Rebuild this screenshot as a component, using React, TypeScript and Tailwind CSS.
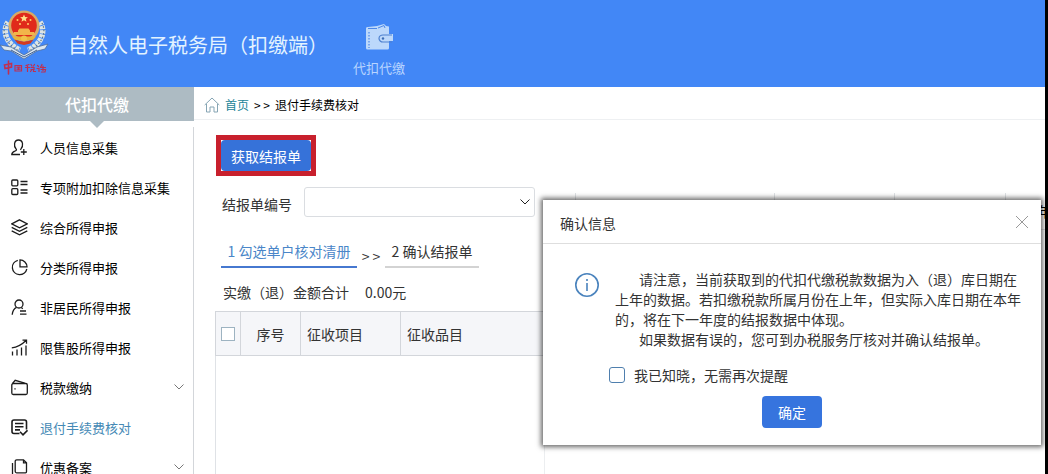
import type { ReactNode } from "react";

type IconName = "person" | "list" | "layers" | "pie" | "resident" | "chart" | "wallet" | "check" | "copy";

const ICONS: Record<IconName, ReactNode> = {
  person: (
    <path d="M4.800 9.500C3.500 8 3.300 6.500 3.600 4.500C4 2.200 5.400 1 7.500 1s3.600 1.200 4 3.500c.3 2-.1 3.800-1.500 5.200M4.800 9.500c1.200 1.200.8 1.900-1 2.700C1.800 13 .8 13.600.8 15.500H9M10 9.700l-.6 1.200M12.800 10v6M9.800 13h6" />
  ),
  list: (
    <>
      <rect x=".8" y="1" width="6" height="5.800" rx="1" />
      <rect x=".8" y="9.700" width="6" height="5.800" rx="1" />
      <path d="M9.500 2.500H16.500M9.500 5.500H16.500M9.500 11H16.500M9.500 14H16.500" />
    </>
  ),
  layers: (
    <path d="M8.500 .8L16.300 4.800 8.500 8.800.7 4.800zM.7 8.300l7.800 4 7.800-4M.7 11.800l7.800 4 7.800-4" />
  ),
  pie: (
    <>
      <path d="M6.800 1.300A7.300 7.300 0 1 0 15.800 10" />
      <path d="M9 .9v6.900h7A7 7 0 0 0 9 .9z" />
    </>
  ),
  resident: (
    <>
      <circle cx="8" cy="5" r="4" />
      <path d="M5.500 8.300C3 9.500 1.600 11.800 1.200 15.700M10.300 8.500l1.500 1.200M9 12h6M9 15.200h6.500" />
    </>
  ),
  chart: (
    <path d="M1.500 12.500v4M6 10.500v6M10.500 8.500v8M15 6.500v10M.8 8.800C6 8.300 10.500 6 15 1.500M11.500 1.200h4v3.500" />
  ),
  wallet: (
    <>
      <rect x=".8" y="4.500" width="15.500" height="11" rx="1.500" />
      <path d="M1.500 4.500L4.200 1.300l9.500 2.900M4 9.300v1.200" />
    </>
  ),
  check: (
    <>
      <path d="M8.500 14.500H3A2 2 0 0 1 1 12.500V3A2 2 0 0 1 3 1h10.500A2 2 0 0 1 15.500 3v7.500" strokeWidth="1.600" />
      <path d="M4 4.500h8.500M4 7.700h8.500M4 10.900h5M9 12.800l3 3 4.500-4.500" strokeWidth="1.600" />
    </>
  ),
  copy: (
    <path d="M5.700.8H12.500l3 3v9a1 1 0 0 1-1 1H5.700a1.500 1.500 0 0 1-1.500-1.500V2.300A1.500 1.500 0 0 1 5.700.8zM12.500.8v3h3M1.500 4v10.700A1.500 1.500 0 0 0 3 16.200h9.500" />
  ),
};

const MENU: { icon: IconName; label: string; expandable?: boolean; active?: boolean }[] = [
  { icon: "person", label: "人员信息采集" },
  { icon: "list", label: "专项附加扣除信息采集" },
  { icon: "layers", label: "综合所得申报" },
  { icon: "pie", label: "分类所得申报" },
  { icon: "resident", label: "非居民所得申报" },
  { icon: "chart", label: "限售股所得申报" },
  { icon: "wallet", label: "税款缴纳", expandable: true },
  { icon: "check", label: "退付手续费核对", active: true },
  { icon: "copy", label: "优惠备案", expandable: true },
];

function MenuIcon({ name }: { name: IconName }) {
  return (
    <svg viewBox="0 0 17 17" className="size-[17px] shrink-0" fill="none" stroke="#1c1c1c" strokeWidth="1.300" aria-hidden="true">
      {ICONS[name]}
    </svg>
  );
}

function Chevron({ className }: { className: string }) {
  return (
    <svg viewBox="0 0 10 6" className={className} fill="none" stroke="currentColor" aria-hidden="true">
      <path d="M.5.500L5 5 9.500.500" />
    </svg>
  );
}

function Emblem() {
  return (
    <svg viewBox="0 0 50 68" className="h-[68px] w-[50px] shrink-0" aria-hidden="true">
      <g fill="none" stroke="#dfe5e2" strokeWidth="5.500" strokeDasharray="3.500 .8">
        <path d="M8 14C2 23 6 36 20 42" />
        <path d="M40 14c6 9 2 22-12 28" />
      </g>
      <g fill="none" stroke="#5b7488" strokeWidth="1.200" strokeDasharray="1.500 2">
        <path d="M6 15C1 25 6 36 19 43" />
        <path d="M42 15c5 10 0 21-13 28" />
      </g>
      <path d="M0 37l11 2 13 8 13-8 11-3-3 5-8 2-13 8-13-8-7-1z" fill="#dce7f0" stroke="#4f6e9c" strokeWidth=".8" />
      <path d="M11 42l13 7 13-7" fill="none" stroke="#3f5f92" />
      <circle cx="24" cy="18" r="15.500" fill="#d8ab66" />
      <circle cx="24" cy="17.500" r="12.800" fill="#e02a1b" />
      <path d="M24 6.500l1.100 2.500 2.800.3-2.100 1.800.7 2.700-2.500-1.500-2.500 1.500.7-2.700-2.100-1.800 2.800-.3z" fill="#ffe08a" />
      <g fill="#ffcf6a">
        <circle cx="17.500" cy="12" r="1" />
        <circle cx="30.500" cy="12" r="1" />
        <circle cx="20" cy="16" r="1" />
        <circle cx="28" cy="16" r="1" />
        <path d="M18 22.500l1.500-2h9l1.500 2v1.500h4l1.500 3h-23l1.500-3h4z" fill="#f2b54a" />
      </g>
      <path d="M12 28.500h24l-3 3.500H15z" fill="#e7b43b" />
      <path d="M14.500 31.500q9.500 4 19 0l-3 4-6.500 1.500-6.500-1.500z" fill="#d43a20" />
      <circle cx="24" cy="30.500" r="3" fill="#f0c24a" />
      <g fill="none" stroke="#c02f50" strokeWidth="1.600" strokeLinecap="round">
        <path d="M4.500 57l7-1.500v3.500l-6.500 1.500zM8.500 53v13" />
        <path d="M15 57.500h6.500v5.500H15zM17 59.200h3M17 61.200h3M18.500 59v2.500" strokeWidth="1.200" />
        <path d="M26 57.500l3-1M27.500 57v6.500M25.500 59.500h4M31 56.500l1 1.500M34.500 56.500l-1 1.500M31 59.500h3v2h-3M32 61.500l-1.500 2M33.500 61.500v2h2" strokeWidth="1.200" />
        <path d="M37.500 57.500l1 1M37 60.500h2v3M42 56.500l-1.500 3h5M43 58v4.500M41 61.500h4.500l-.5 2.500h-3.500" strokeWidth="1.200" />
      </g>
    </svg>
  );
}

function Header() {
  return (
    <header className="flex h-[87px] shrink-0 items-start bg-[#4287f6]">
      <div className="pt-2">
        <Emblem />
      </div>
      <h1 className="ml-[18px] w-[285px] whitespace-nowrap pt-[30px] text-xl leading-[30px] text-[#e3f3ff]">
        自然人电子税务局（扣缴端）
      </h1>
      <a href="#withhold" className="flex flex-col items-center pt-6 text-[13px] leading-5 text-[#b9d5ff]">
        <svg viewBox="0 0 27 27" className="size-[27px]" aria-hidden="true">
          <path d="M2 3l9-1 7-2 2 2 3 .5V10h4v7h-4v7a1.500 1.500 0 0 1-1.500 1.500h-20A1.500 1.500 0 0 1 0 24V4.500A1.500 1.500 0 0 1 2 3z" fill="#bcd8fb" />
          <path d="M2 4.500h9M12 4l6-2.500 1 2.500" fill="none" stroke="#4d88e8" />
          <path d="M3 8v16" stroke="#4d88e8" strokeWidth="1.200" strokeDasharray="1.500 1.500" />
          <path d="M26 11H17a4 3.500 0 0 0 0 7h9" fill="none" stroke="#4d80cf" strokeWidth="1.200" />
          <circle cx="17" cy="14.500" r="1.200" fill="#3c6db5" />
        </svg>
        <span className="mt-[7px]">代扣代缴</span>
      </a>
    </header>
  );
}

function Sidebar() {
  return (
    <aside className="flex w-[194px] shrink-0 flex-col">
      <h2 className="relative h-[34px] shrink-0 bg-[#adbbc3] text-center text-base font-medium leading-[34px] text-white">
        代扣代缴
        <svg viewBox="0 0 14 7" className="absolute left-1/2 top-full h-[7px] w-3.5 -translate-x-1/2" aria-hidden="true">
          <path d="M0 0h14L7 7z" fill="#adbbc3" />
        </svg>
      </h2>
      <nav className="mt-1.5 flex-1 border-r border-[#d3d6da]">
        {MENU.map((item) => (
          <a
            key={item.label}
            href="#menu"
            className={`flex h-10 items-center pl-[11px] pr-[9px] text-[13px] ${item.active ? "text-[#4589b5]" : "text-black"}`}
          >
            <MenuIcon name={item.icon} />
            <span className="ml-3 flex-1 whitespace-nowrap pt-px leading-4">{item.label}</span>
            {item.expandable && <Chevron className="h-1.5 w-2.5 text-[#777]" />}
          </a>
        ))}
      </nav>
    </aside>
  );
}

function Breadcrumb() {
  return (
    <nav className="flex h-[33px] shrink-0 items-center border-b border-[#eef0f2] pl-2.5 pt-1 text-xs text-black">
      <svg viewBox="0 0 16 16" className="size-4" fill="none" stroke="#86a5b4" aria-hidden="true">
        <path d="M.7 8L8 1l7.300 7M2.500 7v8h3.500v-5h4v5h3.500V7" />
      </svg>
      <a href="#home" className="ml-[5px] text-[#1c8497]">首页</a>
      <span className="w-[26px] text-center">&gt; &gt;</span>
      <span>退付手续费核对</span>
    </nav>
  );
}

function FilterPanel() {
  return (
    <section className="flex w-[329px] shrink-0 flex-col text-sm text-[#333]">
      <div className="ml-px mt-[15px] self-start border-[5px] border-[#c8202d]">
        <button type="button" className="block h-[31px] w-[90px] rounded bg-[#3672d9] text-white">
          获取结报单
        </button>
      </div>
      <div className="mt-[11px] flex items-center pl-[7px]">
        <label htmlFor="report" className="w-[82px] pt-1">结报单编号</label>
        <div className="relative">
          <select id="report" className="block h-[30px] w-[231px] appearance-none rounded-[3px] border border-[#dadde1] bg-white px-2">
            <option value="" />
          </select>
          <Chevron className="pointer-events-none absolute right-[5px] top-3 h-1.5 w-2.5 text-[#222]" />
        </div>
      </div>
      <div className="mt-5 flex items-end whitespace-nowrap pl-1.5">
        <span className="h-[31px] w-[136px] border-b-2 border-[#4678d0] text-center leading-7 text-[#4a86c8]">1 勾选单户核对清册</span>
        <span className="w-7 text-center leading-6">&gt; &gt;</span>
        <span className="h-[31px] w-[94px] border-b-2 border-[#d3d3d3] text-center leading-7">2 确认结报单</span>
      </div>
      <p className="flex h-[43px] items-center gap-4 whitespace-nowrap pb-px pl-2 pt-[5px]">
        <span>实缴（退）金额合计</span>
        <span>0.00元</span>
      </p>
      <table className="w-full table-fixed border-collapse text-left">
        <thead>
          <tr className="h-11 border-y border-[#d3d6db] bg-[#f5f6f9]">
            <th className="w-[25px] border-x border-[#d3d6db]">
              <input type="checkbox" aria-label="全选" className="mx-auto block size-3.5 appearance-none border border-[#9db3c1] bg-white" />
            </th>
            <th className="w-[60px] border-r border-[#d3d6db] text-center font-normal">序号</th>
            <th className="w-[100px] border-r border-[#d3d6db] pl-1.5 font-normal">征收项目</th>
            <th className="pl-1.5 font-normal">征收品目</th>
          </tr>
        </thead>
      </table>
      <div className="flex-1 border-l border-[#dfe2e6]" />
    </section>
  );
}

function DetailPanel() {
  return (
    <section className="mt-[73px] flex min-w-0 flex-1 flex-col overflow-hidden text-sm">
      <table className="w-full table-fixed border-collapse">
        <thead>
          <tr className="h-9 border-b border-[#dfe2e5]">
            <th className="w-[31px] border-r border-[#dfe2e5]" />
            <th className="w-[199px] border-r border-[#dfe2e5]" />
            <th className="w-[120px] border-r border-[#dfe2e5]" />
            <th className="w-[111px] border-r border-[#dfe2e5]" />
            <th className="overflow-hidden whitespace-nowrap pl-8 text-left font-normal">年</th>
          </tr>
        </thead>
      </table>
      <div className="flex-1 border-l border-[#eceef0]" />
    </section>
  );
}

function ConfirmDialog() {
  return (
    <div
      role="dialog"
      aria-labelledby="dialog-title"
      className="absolute right-1 top-[200px] flex w-[498px] flex-col bg-white text-sm text-[#333] shadow-[0_0_5px_2px_rgba(0,0,0,0.6)]"
    >
      <div className="flex h-11 items-center justify-between border-b border-[#dedede] pl-[17px] pr-3">
        <h2 id="dialog-title" className="pt-0.5">确认信息</h2>
        <button type="button" aria-label="关闭">
          <svg viewBox="0 0 14 14" className="size-3.5" fill="none" stroke="#999" aria-hidden="true">
            <path d="M1 1l12 12M13 1L1 13" />
          </svg>
        </button>
      </div>
      <div className="flex pl-[31px] pt-[25px]">
        <svg viewBox="0 0 26 26" className="mt-[3px] size-[26px] shrink-0" fill="none" stroke="#4a83bd" aria-hidden="true">
          <circle cx="13" cy="13" r="11.200" strokeWidth="1.600" />
          <path d="M13 11v8M13 7v2" strokeWidth="1.600" />
        </svg>
        <div className="ml-[15px] w-[408px] leading-5">
          <p className="indent-6">
            请注意，当前获取到的代扣代缴税款数据为入（退）库日期在上年的数据。若扣缴税款所属月份在上年，但实际入库日期在本年的，将在下一年度的结报数据中体现。
          </p>
          <p className="indent-6">如果数据有误的，您可到办税服务厅核对并确认结报单。</p>
        </div>
      </div>
      <label className="mt-4 flex items-center gap-[9px] pl-[66px] leading-5">
        <input type="checkbox" className="size-4 appearance-none rounded-[3px] border border-[#4f7fae] bg-white" />
        我已知晓，无需再次提醒
      </label>
      <button type="button" className="mb-[17px] mt-[11px] h-8 w-[60px] self-center rounded bg-[#3674de] text-white">
        确定
      </button>
    </div>
  );
}

export default function App() {
  return (
    <div className="relative flex h-screen overflow-hidden bg-white font-['Noto_Sans_CJK_SC',sans-serif]">
      <div className="relative flex min-w-0 flex-1 flex-col">
        <Header />
        <div className="flex min-h-0 flex-1">
          <Sidebar />
          <main className="flex min-w-0 flex-1 flex-col">
            <Breadcrumb />
            <div className="flex min-h-0 flex-1 pl-[21px]">
              <FilterPanel />
              <DetailPanel />
            </div>
          </main>
        </div>
        <ConfirmDialog />
      </div>
      <div className="w-[3px] shrink-0 bg-black" />
    </div>
  );
}
